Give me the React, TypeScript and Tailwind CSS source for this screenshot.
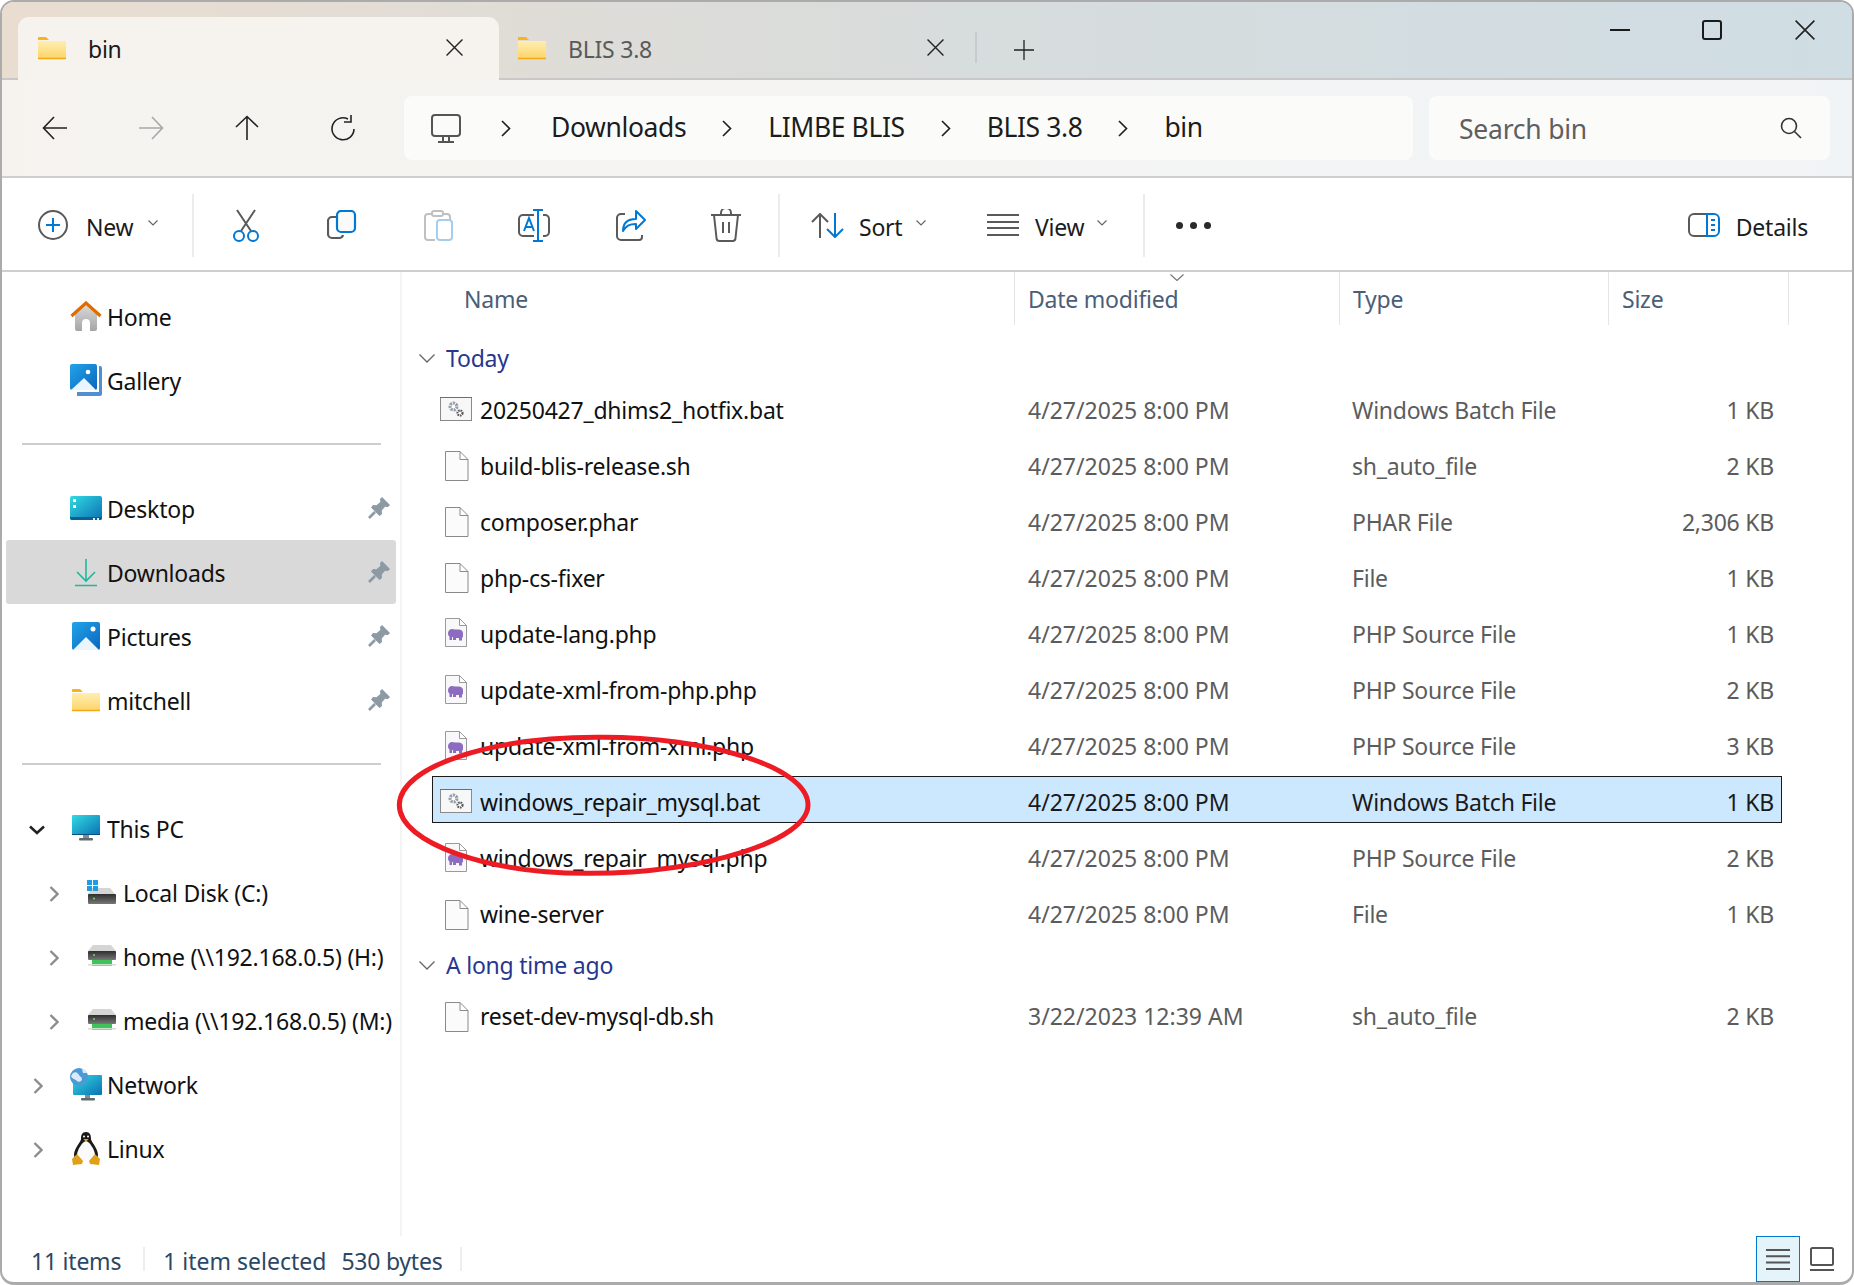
import type { ReactNode } from "react";

type IconName = "file" | "bat" | "php";

type FileRow = {
  name: string;
  date: string;
  type: string;
  size: string;
  icon: IconName;
  selected?: boolean;
};

const todayFiles: FileRow[] = [
  { name: "20250427_dhims2_hotfix.bat", date: "4/27/2025 8:00 PM", type: "Windows Batch File", size: "1 KB", icon: "bat" },
  { name: "build-blis-release.sh", date: "4/27/2025 8:00 PM", type: "sh_auto_file", size: "2 KB", icon: "file" },
  { name: "composer.phar", date: "4/27/2025 8:00 PM", type: "PHAR File", size: "2,306 KB", icon: "file" },
  { name: "php-cs-fixer", date: "4/27/2025 8:00 PM", type: "File", size: "1 KB", icon: "file" },
  { name: "update-lang.php", date: "4/27/2025 8:00 PM", type: "PHP Source File", size: "1 KB", icon: "php" },
  { name: "update-xml-from-php.php", date: "4/27/2025 8:00 PM", type: "PHP Source File", size: "2 KB", icon: "php" },
  { name: "update-xml-from-xml.php", date: "4/27/2025 8:00 PM", type: "PHP Source File", size: "3 KB", icon: "php" },
  { name: "windows_repair_mysql.bat", date: "4/27/2025 8:00 PM", type: "Windows Batch File", size: "1 KB", icon: "bat", selected: true },
  { name: "windows_repair_mysql.php", date: "4/27/2025 8:00 PM", type: "PHP Source File", size: "2 KB", icon: "php" },
  { name: "wine-server", date: "4/27/2025 8:00 PM", type: "File", size: "1 KB", icon: "file" },
];

const olderFiles: FileRow[] = [
  { name: "reset-dev-mysql-db.sh", date: "3/22/2023 12:39 AM", type: "sh_auto_file", size: "2 KB", icon: "file" },
];

function Gradients() {
  return (
    <svg className="absolute w-0 h-0">
      <defs>
        <linearGradient id="folderBody" x1="0" y1="0" x2="0" y2="1">
          <stop offset="0" stopColor="#ffeeb0" />
          <stop offset="1" stopColor="#fcd469" />
        </linearGradient>
        <linearGradient id="homeBody" x1="0" y1="0" x2="0" y2="1">
          <stop offset="0" stopColor="#d8d8d8" />
          <stop offset="1" stopColor="#a6a6a6" />
        </linearGradient>
        <linearGradient id="photoBlue" x1="0" y1="0" x2="1" y2="1">
          <stop offset="0" stopColor="#21a4ea" />
          <stop offset="1" stopColor="#0b66bd" />
        </linearGradient>
        <linearGradient id="screenBlue" x1="0" y1="0" x2="1" y2="1">
          <stop offset="0" stopColor="#32dbe2" />
          <stop offset="1" stopColor="#0a70b4" />
        </linearGradient>
        <linearGradient id="driveDark" x1="0" y1="0" x2="0" y2="1">
          <stop offset="0" stopColor="#2e2e2e" />
          <stop offset="1" stopColor="#777777" />
        </linearGradient>
      </defs>
    </svg>
  );
}

function Folder() {
  return (
    <svg width="28" height="24" viewBox="0 0 28 24">
      <path d="M0 2a1 1 0 0 1 1-1h7l3 3h-11z" fill="#fbb316" />
      <path d="M0 5h28v17a1 1 0 0 1-1 1H1a1 1 0 0 1-1-1z" fill="url(#folderBody)" />
      <path d="M0 22.5h28" stroke="#f2a916" strokeWidth="1.5" />
    </svg>
  );
}

function Home() {
  return (
    <svg width="32" height="31" viewBox="0 0 32 31">
      <path d="M5 13 16 4l11 9v15a2 2 0 0 1-2 2h-5v-8a4 4 0 0 0-8 0v8H7a2 2 0 0 1-2-2z" fill="url(#homeBody)" />
      <path d="M1.5 15 16 2l14.500 13" fill="none" stroke="#e06c00" strokeWidth="3.200" />
    </svg>
  );
}

function Gallery() {
  return (
    <svg width="32" height="32" viewBox="0 0 32 32">
      <path d="M29 2h1a2 2 0 0 1 2 2v26a2 2 0 0 1-2 2H7v-4h22z" fill="#4f8fd2" />
      <rect x="0" y="0" width="27" height="26" rx="2" fill="url(#photoBlue)" />
      <circle cx="18" cy="8" r="2.300" fill="#fff" />
      <path d="M1 26 14 14l12 12z" fill="#eaf5fd" />
    </svg>
  );
}

function Desktop() {
  return (
    <svg width="32" height="24" viewBox="0 0 32 24">
      <rect width="32" height="24" rx="2" fill="url(#screenBlue)" />
      <path d="M0 21h32v1a2 2 0 0 1-2 2H2a2 2 0 0 1-2-2z" fill="#0a5f95" />
      <rect x="3" y="3" width="3" height="3" fill="#fff" />
      <rect x="3" y="9" width="3" height="3" fill="#fff" />
      <rect x="23" y="22" width="2" height="2" fill="#d5eef7" />
      <rect x="27" y="22" width="2" height="2" fill="#d5eef7" />
    </svg>
  );
}

function DownloadArrow() {
  return (
    <svg width="24" height="29" viewBox="0 0 24 29" fill="none" stroke="#20b89b" strokeWidth="1.600">
      <path d="M12 1v22M3 14l9 9 9-9M1 27.500h22" />
    </svg>
  );
}

function Pictures() {
  return (
    <svg width="28" height="28" viewBox="0 0 28 28">
      <rect width="28" height="28" rx="2" fill="url(#photoBlue)" />
      <circle cx="21" cy="7" r="2.500" fill="#fff" />
      <path d="M1 28 14 15l13 13z" fill="#eaf5fd" />
    </svg>
  );
}

function Monitor() {
  return (
    <svg width="28" height="26" viewBox="0 0 28 26">
      <rect x="11" y="20" width="6" height="3" fill="#7f8c96" />
      <rect x="7" y="23" width="14" height="2.500" rx="1" fill="#5e6972" />
      <rect width="28" height="20" rx="1" fill="url(#screenBlue)" />
      <path d="M0 19h28v1H0z" fill="#08507f" />
    </svg>
  );
}

function LocalDisk() {
  return (
    <svg width="30" height="24" viewBox="0 0 30 24">
      <path d="M5 8h18l5 6v1H1v-1z" fill="#d5d5d5" />
      <rect x="1" y="14" width="28" height="10" rx="1" fill="url(#driveDark)" />
      <circle cx="7" cy="18.500" r="1" fill="#5fe36a" />
      <rect x="0" y="0" width="5" height="5" fill="#1b9de2" />
      <rect x="6" y="0" width="5" height="5" fill="#1b9de2" />
      <rect x="0" y="6" width="5" height="5" fill="#1b9de2" />
      <rect x="6" y="6" width="5" height="5" fill="#1b9de2" />
    </svg>
  );
}

function NetDrive() {
  return (
    <svg width="28" height="22" viewBox="0 0 28 22">
      <path d="M5 0h18l5 6v1H0v-1z" fill="#d5d5d5" />
      <rect y="6" width="28" height="9" rx="1" fill="url(#driveDark)" />
      <circle cx="6" cy="10" r="1" fill="#5fe36a" />
      <rect x="4" y="15" width="20" height="6" fill="#3fc25a" />
      <rect y="19" width="28" height="1.500" fill="#cfe0cf" />
    </svg>
  );
}

function NetworkIcon() {
  return (
    <svg width="32" height="33" viewBox="0 0 32 33">
      <rect x="15" y="27" width="5" height="3" fill="#7f8c96" />
      <rect x="11" y="30" width="14" height="2.500" rx="1" fill="#5e6972" />
      <rect x="3" y="7" width="29" height="20" rx="1" fill="url(#screenBlue)" />
      <circle cx="9" cy="9" r="9" fill="#4a9ad8" />
      <path d="M3 5c3-2 5 0 6 2s3 2 3 4-3 4-5 2-5-2-6-5zM12 1c3 0 5 2 5 4l-4 0z" fill="#dceaf5" />
    </svg>
  );
}

function Tux() {
  return (
    <svg width="28" height="33" viewBox="0 0 28 33">
      <path d="M14 0c4 0 5 3 5 7 0 3 7 9 7 16 0 3-2 5-3 5H5c-1 0-3-2-3-5 0-7 7-13 7-16 0-4 1-7 5-7z" fill="#1a1a1a" />
      <path d="M14 9c3 0 9 9 9 14 0 4-4 7-9 7s-9-3-9-7c0-5 6-14 9-14z" fill="#fbfbfb" />
      <path d="M11.500 7h5L14 10z" fill="#e4a11b" />
      <circle cx="12" cy="4.500" r="1" fill="#fff" />
      <circle cx="16" cy="4.500" r="1" fill="#fff" />
      <path d="M5 22l6 7-1 3-9 1-1-6zM23 22l-6 7 1 3 9 1 1-6z" fill="#dfa117" />
    </svg>
  );
}

function Pin() {
  return (
    <svg width="22" height="22" viewBox="0 0 22 22" fill="#8e9aa3">
      <path d="M14 0 22 8l-2 2-3-.3-3.200 3.800.2 3.500-2.500 2L3 10.500l2-2.500 3.500.2L12.300 5 12 2z" />
      <path d="M7 15 1 21" stroke="#8e9aa3" strokeWidth="2.600" fill="none" />
    </svg>
  );
}

function TreeChevron({ open }: { open?: boolean }) {
  if (open) {
    return (
      <svg width="16" height="10" viewBox="0 0 16 10" fill="none" stroke="#222" strokeWidth="2.600">
        <path d="M1 1.500 8 8l7-6.500" />
      </svg>
    );
  }
  return (
    <svg width="10" height="16" viewBox="0 0 10 16" fill="none" stroke="#8c8c8c" strokeWidth="2.400">
      <path d="M1.500 1 8.500 8l-7 7" />
    </svg>
  );
}

function SmallChevron({ color = "#666" }: { color?: string }) {
  return (
    <svg width="10" height="6" viewBox="0 0 10 6" fill="none" stroke={color} strokeWidth="1.200">
      <path d="M.5.500 5 5 9.500.500" />
    </svg>
  );
}

function FileGlyph({ name }: { name: IconName }) {
  if (name === "bat") {
    return (
      <svg width="32" height="24" viewBox="0 0 32 24" className="-ml-[5px] -mt-[3px]">
        <rect x=".5" y=".5" width="31" height="23" fill="#f7f7f7" stroke="#8a8a8a" />
        <path d="M0 .5h32" stroke="#6e6e6e" />
        <circle cx="13.500" cy="9.500" r="3.400" fill="#fff" stroke="#939ca8" strokeWidth="3.200" strokeDasharray="2.100 .9" />
        <circle cx="20" cy="16" r="2.500" fill="#fff" stroke="#555" strokeWidth="2.200" strokeDasharray="1.600 .8" />
      </svg>
    );
  }
  if (name === "php") {
    return (
      <svg width="22" height="29" viewBox="0 0 22 29" className="-mt-[3px]">
        <path d="M.5.500h14l7 7V28.500H.5z M14.500 .5v7h7" fill="#f8f7f9" stroke="#9a9a9a" strokeWidth="1" />
        <path d="M3 15c0-2 2-4 4-4 1 0 2 .5 3 .5h3c3 0 5 1 5 4v3c0 1-1 1-1 1v3h-3v-2.500h-3V22H8v-3H7v3H4.500v-3.500C3.500 18 3 17 3 15z" fill="#8b6cc0" />
      </svg>
    );
  }
  return (
    <svg width="24" height="30" viewBox="0 0 24 30">
      <path d="M.5.500h14.500l8 8V29.500H.5z M15 .5v8h8" fill="#fbfbfb" stroke="#8a8a8a" strokeWidth="1" />
    </svg>
  );
}

function SideRow({
  icon,
  label,
  chevron,
  open,
  indent,
  pinned,
  active,
}: {
  icon: ReactNode;
  label: string;
  chevron?: boolean;
  open?: boolean;
  indent?: boolean;
  pinned?: boolean;
  active?: boolean;
}) {
  return (
    <div className={`ml-1 w-[390px] h-16 pt-[3px] flex items-center rounded-[3px] ${active ? "bg-[#d9d9d9]" : ""}`}>
      <div className={`${indent ? "w-[80px]" : "w-[64px]"} shrink-0 flex items-center ${indent ? "pl-[43px]" : open ? "pl-[23px]" : "pl-[27px]"}`}>
        {chevron && <TreeChevron open={open} />}
      </div>
      <div className="w-8 shrink-0 flex justify-center items-center -mt-[3px]">{icon}</div>
      <span className="ml-[5px] whitespace-nowrap">{label}</span>
      {pinned && (
        <span className="ml-auto mr-[6px] mb-[4px]">
          <Pin />
        </span>
      )}
    </div>
  );
}

function Divider({ className }: { className: string }) {
  return <div className={`ml-5 w-[359px] h-[2px] bg-[#cdcdcd] ${className}`} />;
}

function Sidebar() {
  return (
    <div className="w-[400px] shrink-0 border-r-2 border-[#f4f4f4] pt-3 overflow-hidden">
      <SideRow icon={<Home />} label="Home" />
      <SideRow icon={<Gallery />} label="Gallery" />
      <Divider className="mt-[31px]" />
      <div className="mt-[31px]">
        <SideRow icon={<Desktop />} label="Desktop" pinned />
        <SideRow icon={<DownloadArrow />} label="Downloads" pinned active />
        <SideRow icon={<Pictures />} label="Pictures" pinned />
        <SideRow icon={<Folder />} label="mitchell" pinned />
      </div>
      <Divider className="mt-[31px]" />
      <div className="mt-[31px]">
        <SideRow icon={<Monitor />} label="This PC" chevron open />
        <SideRow icon={<LocalDisk />} label="Local Disk (C:)" chevron indent />
        <SideRow icon={<NetDrive />} label="home (\\192.168.0.5) (H:)" chevron indent />
        <SideRow icon={<NetDrive />} label="media (\\192.168.0.5) (M:)" chevron indent />
        <SideRow icon={<NetworkIcon />} label="Network" chevron />
        <SideRow icon={<Tux />} label="Linux" chevron />
      </div>
    </div>
  );
}

function Row({ file }: { file: FileRow }) {
  const muted = file.selected ? "text-[#1a1a1a]" : "text-[#5c5c5c]";
  return (
    <div className="h-[56.1px] flex items-center ml-[30px] w-[1350px]">
      <div
        className={`h-[47px] w-full flex items-center ${
          file.selected ? "bg-[#cce8ff] border border-[#1a1a1a] pl-3 pr-[7px] pt-[6px] mb-[6px]" : "pl-[13px] pr-2"
        }`}
      >
        <div className="w-[35px] shrink-0 flex items-center">
          <FileGlyph name={file.icon} />
        </div>
        <div className="w-[548px] shrink-0 whitespace-nowrap text-[#111]">{file.name}</div>
        <div className={`w-[324px] shrink-0 tracking-normal ${muted}`}>{file.date}</div>
        <div className={`flex-1 ${muted}`}>{file.type}</div>
        <div className={`whitespace-nowrap ${muted}`}>{file.size}</div>
      </div>
    </div>
  );
}

function GroupHeader({ label, className }: { label: string; className: string }) {
  return (
    <div className={`flex items-center pl-[17px] text-[#27368f] ${className}`}>
      <svg width="16" height="9" viewBox="0 0 16 9" fill="none" stroke="#666" strokeWidth="1.300">
        <path d="M.5.500 8 8 15.500.500" />
      </svg>
      <span className="ml-[11px]">{label}</span>
    </div>
  );
}

function FileList() {
  return (
    <div className="flex-1 relative">
      <div className="h-14 flex text-[#4a5e78]">
        <div className="w-[613px] pl-[62px] pt-4 h-[53px] border-r border-[#e5e5e5]">Name</div>
        <div className="w-[325px] pl-[13px] pt-4 h-[53px] border-r border-[#e5e5e5] relative">
          Date modified
          <svg width="14" height="7" viewBox="0 0 14 7" fill="none" stroke="#777" strokeWidth="1.200" className="absolute left-[155px] top-[2px]">
            <path d="M.5.500 7 6.500 13.500.500" />
          </svg>
        </div>
        <div className="w-[269px] pl-[13px] pt-4 h-[53px] border-r border-[#e5e5e5]">Type</div>
        <div className="w-[180px] pl-[13px] pt-4 h-[53px] border-r border-[#e5e5e5]">Size</div>
      </div>
      <GroupHeader label="Today" className="h-[54px] pt-[6px]" />
      {todayFiles.map((f) => (
        <Row key={f.name} file={f} />
      ))}
      <GroupHeader label="A long time ago" className="h-[46px]" />
      {olderFiles.map((f) => (
        <Row key={f.name} file={f} />
      ))}
    </div>
  );
}

function ToolIcon({ children }: { children: ReactNode }) {
  return <div className="w-24 h-full flex items-center justify-center shrink-0">{children}</div>;
}

function Sep() {
  return <div className="w-[2px] h-[63px] bg-[#ececec] shrink-0" />;
}

function Toolbar() {
  const gray = "#5a5a5a";
  const blue = "#0078d4";
  return (
    <div className="h-[90px] pt-[2px] flex items-center bg-white border-b-2 border-[#cfcfcf] box-content text-[#1c1c1c]">
      <div className="w-[190px] shrink-0 flex items-center pl-[36px]">
        <svg width="30" height="30" viewBox="0 0 30 30" fill="none" strokeWidth="2">
          <circle cx="15" cy="15" r="14" stroke={gray} />
          <path d="M15 8v14M8 15h14" stroke={blue} />
        </svg>
        <span className="ml-[18px] pt-[5px]">New</span>
        <span className="ml-[15px] mb-1">
          <SmallChevron />
        </span>
      </div>
      <Sep />
      <div className="w-[4px]" />
      <ToolIcon>
        <svg width="28" height="33" viewBox="0 0 28 33" fill="none" strokeWidth="2">
          <path d="M5 1 19 22M23 1 9 22" stroke={gray} />
          <circle cx="7" cy="27" r="5" stroke={blue} />
          <circle cx="21" cy="27" r="5" stroke={blue} />
        </svg>
      </ToolIcon>
      <ToolIcon>
        <svg width="30" height="30" viewBox="0 0 30 30" fill="none" strokeWidth="2.200">
          <path d="M9 7H5a4 4 0 0 0-4 4v13a4 4 0 0 0 4 4h7a4 4 0 0 0 4-3" stroke={gray} />
          <rect x="10" y="1" width="18" height="21" rx="4" fill="#fafafa" stroke={blue} />
        </svg>
      </ToolIcon>
      <ToolIcon>
        <svg width="30" height="33" viewBox="0 0 30 33" fill="none" strokeWidth="2">
          <path d="M9 5H5a3 3 0 0 0-3 3v20a3 3 0 0 0 3 3h7M21 5h3a3 3 0 0 1 3 3v3" stroke="#c0c0c0" />
          <rect x="9" y="2" width="11" height="5" rx="2" stroke="#c0c0c0" />
          <rect x="14" y="11" width="15" height="20" rx="3" stroke="#a5cdee" />
        </svg>
      </ToolIcon>
      <ToolIcon>
        <svg width="34" height="33" viewBox="0 0 34 33" fill="none" strokeWidth="2">
          <path d="M17 6H6a4 4 0 0 0-4 4v13a4 4 0 0 0 4 4h11M26 6h2a4 4 0 0 1 4 4v13a4 4 0 0 1-4 4h-2" stroke={gray} />
          <path d="M21 1v31M16 1h10M16 32h10" stroke={blue} />
          <path d="M7 22l5-13 5 13M8.800 18h6.400" stroke={blue} />
        </svg>
      </ToolIcon>
      <div className="w-[96px] h-full flex items-center justify-center shrink-0 pl-[1px]">
        <svg width="31" height="31" viewBox="0 0 31 31" fill="none" strokeWidth="2">
          <path d="M10 4H6a4 4 0 0 0-4 4v18a4 4 0 0 0 4 4h18a3 3 0 0 0 3-3v-2" stroke={gray} />
          <path d="M21 1l9 9-9 9v-5c-7 0-10 2-13 7 0-8 5-12 13-12z" stroke={blue} strokeLinejoin="round" />
        </svg>
      </div>
      <div className="w-[96px] h-full flex items-center justify-center shrink-0">
        <svg width="30" height="33" viewBox="0 0 30 33" fill="none" stroke={gray} strokeWidth="2">
          <path d="M0 6h30M10 6V4a4 4 0 0 1 10 0v2M3 6l2.500 23a3 3 0 0 0 3 3h13a3 3 0 0 0 3-3L27 6M12 13v11M18 13v11" />
        </svg>
      </div>
      <div className="w-[4px]" />
      <Sep />
      <div className="flex items-center pl-[31px] w-[207px] shrink-0">
        <svg width="33" height="25" viewBox="0 0 33 25" fill="none" strokeWidth="2">
          <path d="M1 9 9 1l8 8M9 1v24" stroke={gray} />
          <path d="M16 16l8 8 8-8M24 0v24" stroke={blue} />
        </svg>
        <span className="ml-[15px] pt-[5px]">Sort</span>
        <span className="ml-[14px] mb-1">
          <SmallChevron />
        </span>
      </div>
      <div className="flex items-center w-[156px] shrink-0">
        <svg width="32" height="22" viewBox="0 0 32 22" fill="none" stroke={gray} strokeWidth="2">
          <path d="M0 1h32M0 8h32M0 14h32M0 21h32" />
        </svg>
        <span className="ml-[16px] pt-[5px]">View</span>
        <span className="ml-[13px] mb-1">
          <SmallChevron />
        </span>
      </div>
      <Sep />
      <div className="flex gap-[7px] ml-[31px]">
        <span className="w-[7px] h-[7px] rounded-full bg-[#2a2a2a]" />
        <span className="w-[7px] h-[7px] rounded-full bg-[#2a2a2a]" />
        <span className="w-[7px] h-[7px] rounded-full bg-[#2a2a2a]" />
      </div>
      <div className="ml-auto flex items-center pr-[44px]">
        <svg width="32" height="24" viewBox="0 0 32 24" fill="none" strokeWidth="2">
          <path d="M19 1H6a5 5 0 0 0-5 5v12a5 5 0 0 0 5 5h13" stroke={gray} />
          <path d="M19 1h7a5 5 0 0 1 5 5v12a5 5 0 0 1-5 5h-7z" stroke={blue} />
          <path d="M23 7h4M23 12h4M23 17h4" stroke={blue} />
        </svg>
        <span className="ml-[16px] pt-[5px]">Details</span>
      </div>
    </div>
  );
}

function Crumb({ label, last }: { label: string; last?: boolean }) {
  return (
    <>
      <span className="whitespace-nowrap mb-[1px]">{label}</span>
      {!last && (
        <svg width="10" height="17" viewBox="0 0 10 17" fill="none" stroke="#222" strokeWidth="1.700" className="mx-[36px] shrink-0">
          <path d="M1 1l7.500 7.500L1 16" />
        </svg>
      )}
    </>
  );
}

function AddressBar() {
  return (
    <div className="h-[96px] box-content flex items-center bg-gradient-to-r from-[#f6f3ef] to-[#f1f4f6] border-b-2 border-[#cfcfcf]">
      <div className="w-[402px] shrink-0 flex items-center">
        <div className="w-[96px] flex justify-center ml-[5px]">
          <svg width="26" height="26" viewBox="0 0 26 26" fill="none" stroke="#222" strokeWidth="1.600">
            <path d="M25 13H2M12 2 1.500 13 12 24" />
          </svg>
        </div>
        <div className="w-[96px] flex justify-center">
          <svg width="26" height="26" viewBox="0 0 26 26" fill="none" stroke="#a8a8a8" strokeWidth="1.600">
            <path d="M1 13h23M14 2l10.500 11L14 24" />
          </svg>
        </div>
        <div className="w-[96px] flex justify-center">
          <svg width="26" height="26" viewBox="0 0 26 26" fill="none" stroke="#222" strokeWidth="1.600">
            <path d="M13 25V2M2 12 13 1.500 24 12" />
          </svg>
        </div>
        <div className="w-[96px] flex justify-center">
          <svg width="26" height="26" viewBox="0 0 26 26" fill="none" stroke="#222" strokeWidth="1.600">
            <path d="M24 14a11 11 0 1 1-6-10M21 0v7h-7" />
          </svg>
        </div>
      </div>
      <div className="w-[1009px] h-16 shrink-0 rounded-lg bg-[#fbfbfa] flex items-center pl-[27px] text-[26.500px] tracking-[-0.015em] text-[#1c1c1c]">
        <svg width="30" height="30" viewBox="0 0 30 30" fill="none" stroke="#555" strokeWidth="2" className="mr-[40px] shrink-0 mt-[2px]">
          <rect x="1" y="1" width="28" height="21" rx="3" />
          <path d="M12 23v4M18 23v4M7 28h16" />
        </svg>
        <svg width="10" height="17" viewBox="0 0 10 17" fill="none" stroke="#222" strokeWidth="1.700" className="mr-[40px] shrink-0">
          <path d="M1 1l7.500 7.500L1 16" />
        </svg>
        <Crumb label="Downloads" />
        <Crumb label="LIMBE BLIS" />
        <Crumb label="BLIS 3.8" />
        <Crumb label="bin" last />
      </div>
      <div className="ml-4 w-[401px] h-16 shrink-0 rounded-lg bg-[#fbfbfa] flex items-center pl-[30px] pr-[28px] text-[26.500px] text-[#5f5f5f]">
        <span className="mt-[2px]">Search bin</span>
        <svg width="22" height="22" viewBox="0 0 22 22" fill="none" stroke="#333" strokeWidth="1.600" className="ml-auto">
          <circle cx="9" cy="9" r="7.500" />
          <path d="M14.500 14.500 21 21" />
        </svg>
      </div>
    </div>
  );
}

function CloseX({ size = 16, color = "#222" }: { size?: number; color?: string }) {
  return (
    <svg width={size} height={size} viewBox="0 0 16 16" fill="none" stroke={color} strokeWidth="1.300">
      <path d="M.5.500l15 15M15.500.500l-15 15" />
    </svg>
  );
}

function TitleBar() {
  return (
    <div className="h-[76px] flex items-end pl-4 bg-gradient-to-r from-[#e9ddd0] via-[#d8dcdc] to-[#cfdde4] border-b-2 border-[#c8c8c8] box-content">
      <div className="w-[481px] h-[63px] -mb-[2px] shrink-0 rounded-t-[11px] bg-[#f6f3ef] flex items-center pl-[20px] pr-[36px] text-[#1a1a1a]">
        <span className="mb-[2px] flex">
          <Folder />
        </span>
        <span className="ml-[22px] pt-[1px]">bin</span>
        <span className="ml-auto mb-[2px] flex">
          <CloseX size={17} />
        </span>
      </div>
      <div className="w-[478px] h-[63px] -mb-[2px] shrink-0 flex items-center pl-[19px] pr-[33px] text-[#5a5a5a]">
        <span className="mb-[2px] flex">
          <Folder />
        </span>
        <span className="ml-[22px] pt-[1px]">BLIS 3.8</span>
        <span className="ml-auto mb-[2px] flex">
          <CloseX size={17} />
        </span>
      </div>
      <div className="w-[2px] h-[31px] bg-[#c6cbcd] mb-[15px] -ml-[2px] shrink-0" />
      <div className="ml-[37px] mb-[18px] shrink-0">
        <svg width="20" height="20" viewBox="0 0 20 20" fill="none" stroke="#222" strokeWidth="1.300">
          <path d="M10 0v20M0 10h20" />
        </svg>
      </div>
      <div className="ml-auto self-start flex items-center h-[56px] pr-[37px]">
        <div className="w-[20px] h-[2.500px] bg-[#1a1a1a]" />
        <div className="ml-[72px] w-[20px] h-[20px] rounded-[3px] border-2 border-[#1a1a1a]" />
        <div className="ml-[73px]">
          <CloseX size={20} />
        </div>
      </div>
    </div>
  );
}

function StatusBar() {
  return (
    <div className="h-[46px] flex items-center text-[#2c4763]">
      <span className="ml-[29px] pt-[5px]">11 items</span>
      <div className="ml-[22px] w-[2px] h-[24px] bg-[#eeeeee]" />
      <span className="ml-[18px] pt-[5px] tracking-normal">1 item selected</span>
      <span className="ml-[15px] pt-[5px]">530 bytes</span>
      <div className="ml-[18px] w-[2px] h-[24px] bg-[#eeeeee]" />
      <div className="ml-auto flex items-center h-full pr-[18px]">
        <div className="w-[44px] h-full bg-[#e5f3fb] border border-[#0078d4] flex items-center justify-center">
          <svg width="24" height="21" viewBox="0 0 24 21" fill="none" stroke="#555" strokeWidth="2">
            <path d="M0 1h24M0 7.300h24M0 13.600h24M0 20h24" />
          </svg>
        </div>
        <div className="ml-[10px]">
          <svg width="24" height="24" viewBox="0 0 24 24" fill="none" stroke="#555" strokeWidth="2">
            <rect x="1" y="1" width="22" height="17" rx="1.500" />
            <path d="M0 23h24" />
          </svg>
        </div>
      </div>
    </div>
  );
}

export default function App() {
  return (
    <div className="relative w-[1854px] h-[1285px] bg-white font-['Noto_Sans','Liberation_Sans',sans-serif] text-[23px] leading-none tracking-[-0.01em] text-[#111] overflow-hidden">
      <Gradients />
      <div className="w-[1854px] h-[1285px] rounded-[14px] border-2 border-b-[3px] border-[#ababab] overflow-hidden flex flex-col">
        <TitleBar />
        <AddressBar />
        <Toolbar />
        <div className="flex flex-1 min-h-0">
          <Sidebar />
          <FileList />
        </div>
        <StatusBar />
      </div>
      <svg
        viewBox="0 0 1380 1020"
        className="absolute left-[390px] top-[700px] w-[460px] h-[340px] pointer-events-none"
        fill="none"
        stroke="#ed1c24"
        strokeWidth="15"
      >
        <path d="M620 112C300 112 28 200 28 315C28 430 300 522 600 520C950 518 1254 420 1254 315C1254 200 950 108 620 112Z" />
      </svg>
    </div>
  );
}
